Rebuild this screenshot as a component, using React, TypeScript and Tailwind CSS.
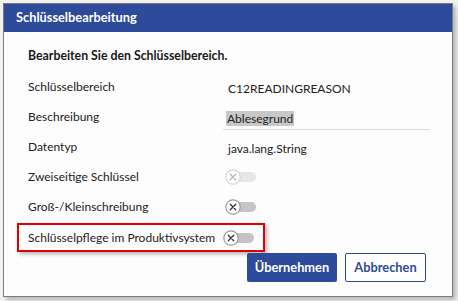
import React from "react";

const font = { fontFamily: 'Lato, "Open Sans", sans-serif' };

function Toggle({ disabled = false }: { disabled?: boolean }) {
  const ring = disabled ? "#d4d4d4" : "#9a9a9a";
  const x = disabled ? "#b5b5b5" : "#333333";
  const track = disabled ? "bg-[#e6e6e6]" : "bg-[#c4c4c4]";
  return (
    <div className="relative ml-[-3px] h-[16px] w-[32px]">
      <div className={`absolute left-[8px] top-[3px] h-[10px] w-[23px] rounded-full ${track}`} />
      <svg className="absolute left-0 top-0" width="16" height="16" viewBox="0 0 16 16">
        <circle cx="8" cy="8" r="7.2" fill="#ffffff" stroke={ring} strokeWidth="1.2" />
        <path d="M5.3 5.3 L10.7 10.7 M10.7 5.3 L5.3 10.7" stroke={x} strokeWidth="1.3" strokeLinecap="round" />
      </svg>
    </div>
  );
}

function Row({ label, children }: { label: string; children: React.ReactNode }) {
  return (
    <div className="flex h-[30px] items-center">
      <div className="w-[200px] shrink-0 whitespace-nowrap text-[12px] leading-[16px] text-[#222]">{label}</div>
      <div className="flex-1">{children}</div>
    </div>
  );
}

export default function App() {
  return (
    <div className="h-[301px] w-[458px] bg-[#f2f2f2] pl-[3px] pt-[3px]" style={font}>
      <div className="flex h-[294px] w-[450px] flex-col border border-[#7c7c7c] bg-[#fdfdfd] shadow-[3px_3px_4px_rgba(0,0,0,0.25)]">
        <div className="flex h-[28px] shrink-0 items-center bg-[#2e4a9a] pl-[12px] text-[12.8px] font-bold text-white">
          Schlüsselbearbeitung
        </div>
        <div className="flex flex-1 flex-col px-[24px] pt-[16px]">
          <div className="text-[12.3px] font-bold leading-[16px] text-[#1a1a1a]">Bearbeiten Sie den Schlüsselbereich.</div>
          <div className="mt-[8px] flex flex-col">
            <Row label="Schlüsselbereich">
              <span className="text-[12px] text-[#222]">C12READINGREASON</span>
            </Row>
            <Row label="Beschreibung">
              <div className="mr-[-2px] ml-[-5px] mt-[4px] border-b border-[#dcdcdc] pb-[2px] pl-[3px] leading-[16px]">
                <span className="bg-[#c8c8c8] px-[1px] text-[12px] text-[#222]">Ablesegrund</span>
              </div>
            </Row>
            <Row label="Datentyp">
              <span className="text-[12px] text-[#222]">java.lang.String</span>
            </Row>
            <Row label="Zweiseitige Schlüssel">
              <Toggle disabled />
            </Row>
            <Row label="Groß-/Kleinschreibung">
              <Toggle />
            </Row>
            <div className="ml-[-11px] mt-[1px] flex h-[29px] w-[248px] items-center border-2 border-[#e00000] pl-[9px] shadow-[2px_2px_4px_rgba(0,0,0,0.3)]">
              <div className="w-[198px] shrink-0 whitespace-nowrap text-[12px] leading-[16px] text-[#222]">Schlüsselpflege im Produktivsystem</div>
              <Toggle />
            </div>
          </div>
          <div className="mt-[1px] flex justify-end gap-[8px] pr-[2px]">
            <button className="h-[29px] w-[90px] rounded-[2px] bg-[#2e4a9a] text-[12.8px] font-bold text-white">
              Übernehmen
            </button>
            <button className="h-[29px] w-[81px] rounded-[2px] border border-[#2e4a9a] bg-white text-[12.8px] font-bold text-[#2e4a9a]">
              Abbrechen
            </button>
          </div>
        </div>
      </div>
    </div>
  );
}
